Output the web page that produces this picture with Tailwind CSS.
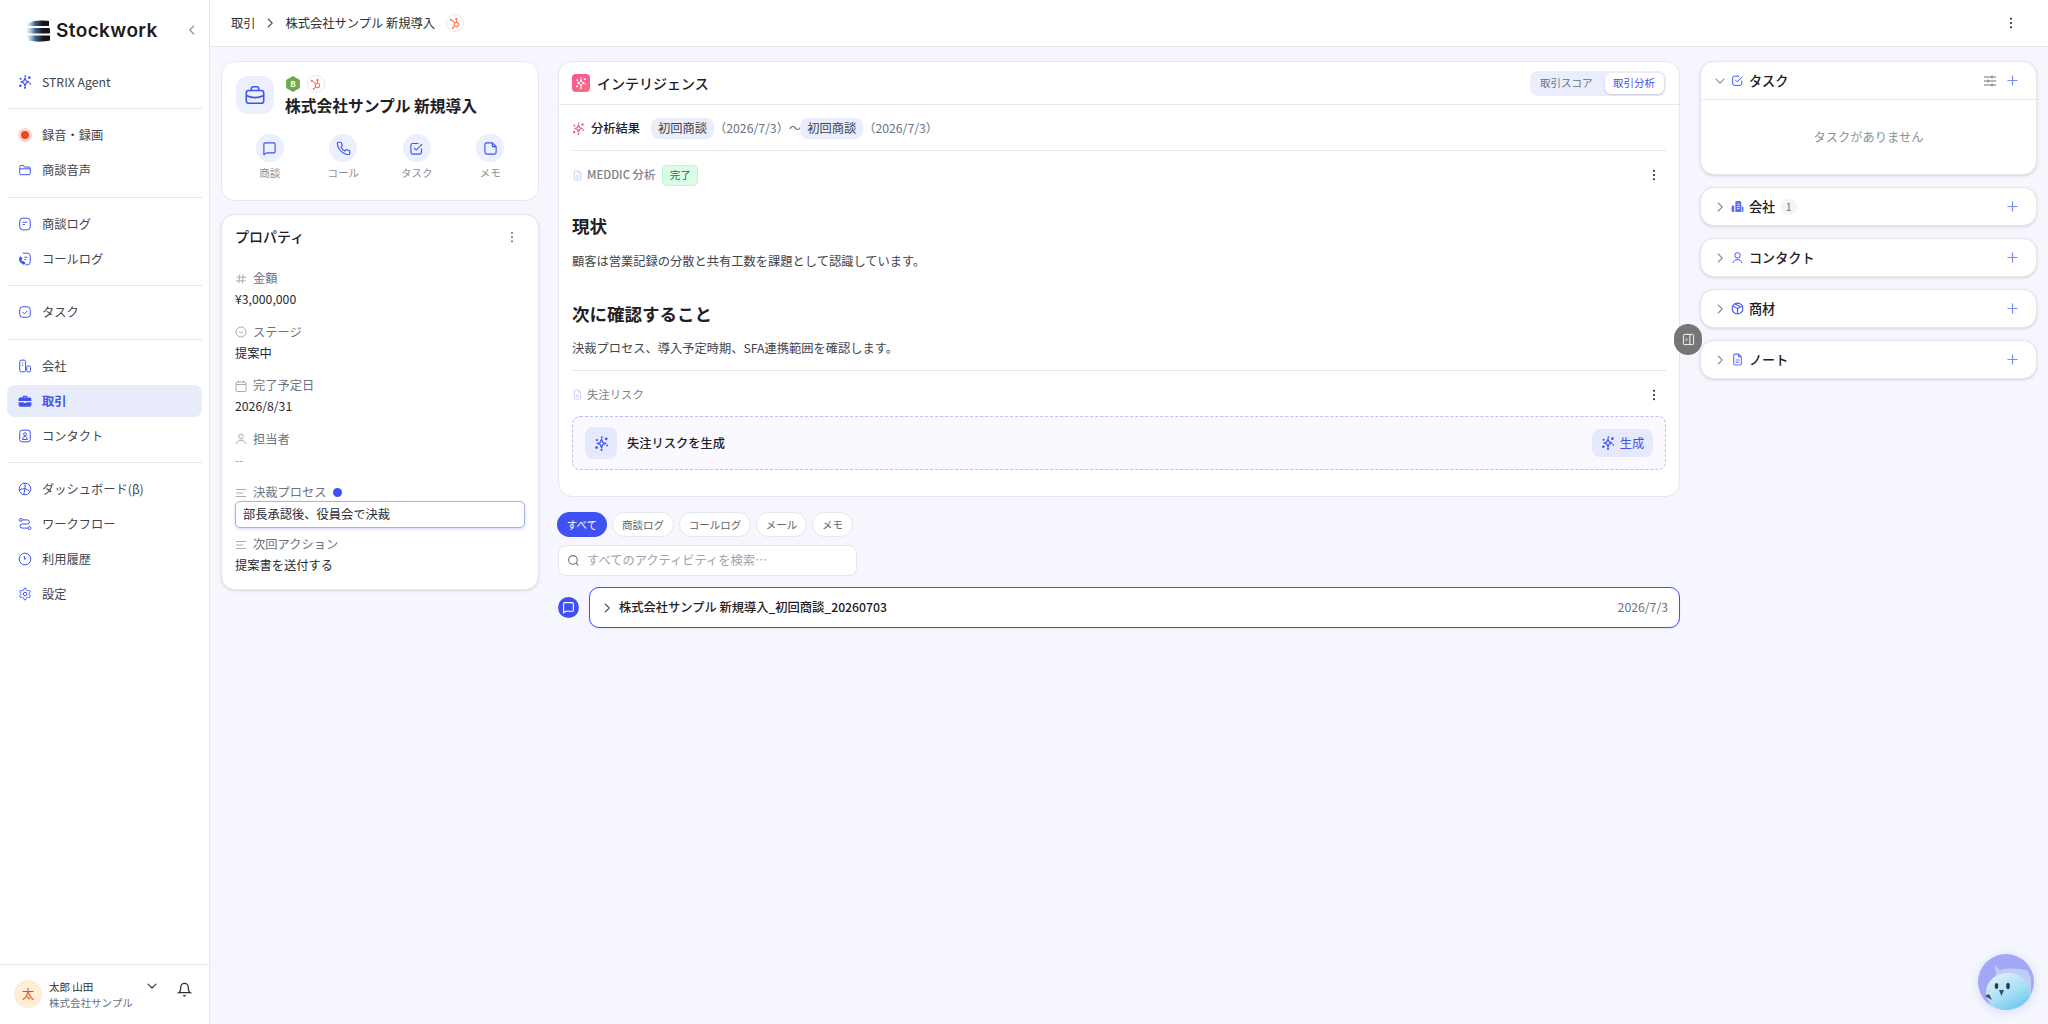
<!DOCTYPE html>
<html lang="ja">
<head>
    <meta charset="UTF-8">
    <title>株式会社サンプル 新規導入</title>
    <script src="https://cdn.jsdelivr.net/npm/@tailwindcss/browser@4"></script>
</head>
<body class="bg-[#f5f6fe] font-['Noto_Sans_CJK_JP',sans-serif] text-[12.25px] text-[#1f2937]">
    <!-- Shared icons -->
    <svg class="hidden">
        <symbol id="sparkle" viewBox="0 0 24 24"><path d="M12 5l1.900 5.100L19 12l-5.100 1.900L12 19l-1.900-5.100L5 12l5.100-1.900z" fill="none" stroke="currentColor" stroke-width="2" stroke-linejoin="round"/><circle cx="19.500" cy="4.500" r="2.200" fill="currentColor"/><circle cx="4.500" cy="6.500" r="1.800" fill="currentColor"/><circle cx="4" cy="18.500" r="2.200" fill="currentColor"/><circle cx="21" cy="15" r="1.500" fill="currentColor"/><circle cx="12" cy="22" r="1.800" fill="currentColor"/><circle cx="12.500" cy="2" r="1.500" fill="currentColor"/></symbol>
        <symbol id="hubspot" viewBox="0 0 24 24"><g fill="none" stroke="#ff7a59" stroke-width="1.900"><circle cx="14.500" cy="14.500" r="3.800"/><path d="M14.500 11V6.500M12 12L6.500 7.500M11.500 17l-3 3"/></g><circle cx="14.500" cy="5" r="2" fill="#ff7a59"/><circle cx="5" cy="6.500" r="2" fill="#ff7a59"/><circle cx="8" cy="20.500" r="1.700" fill="#ff7a59"/></symbol>
        <symbol id="kebab" viewBox="0 0 12 12"><circle cx="6" cy="1.800" r="1" fill="currentColor"/><circle cx="6" cy="6" r="1" fill="currentColor"/><circle cx="6" cy="10.200" r="1" fill="currentColor"/></symbol>
        <symbol id="doc" viewBox="0 0 24 24"><path d="M14 2H7a2 2 0 0 0-2 2v16a2 2 0 0 0 2 2h10a2 2 0 0 0 2-2V7z" fill="none" stroke="currentColor" stroke-width="2"/><path d="M14 2v5h5M8.500 13h7M8.500 17h7" fill="none" stroke="currentColor" stroke-width="2"/></symbol>
        <symbol id="lines" viewBox="0 0 12 12"><path d="M1 2.500h10M1 6h7M1 9.500h10" fill="none" stroke="currentColor" stroke-width="1.100"/></symbol>
        <symbol id="plus" viewBox="0 0 12 12"><path d="M6 1v10M1 6h10" fill="none" stroke="currentColor" stroke-width="1.300" stroke-linecap="round"/></symbol>
        <symbol id="chev-r" viewBox="0 0 12 12"><path d="M4.200 2l4 4-4 4" fill="none" stroke="currentColor" stroke-width="1.100" stroke-linecap="round" stroke-linejoin="round"/></symbol>
    </svg>

    <div class="flex h-[1024px] w-[2048px] overflow-hidden">
        <!-- Sidebar -->
        <aside class="flex h-full w-[210px] shrink-0 flex-col border-r border-[#e5e7eb] bg-white">
            <div class="flex h-[66px] shrink-0 items-start pl-[26px] pt-[19px]">
                <svg class="h-[24px] w-[25px]" viewBox="0 0 25 24">
                    <defs>
                        <linearGradient id="logoBar" x1="0" x2="1" y1="0" y2="0"><stop offset="0" stop-color="#9cc3e6" stop-opacity="0.25"/><stop offset="0.35" stop-color="#41698c"/><stop offset="0.7" stop-color="#15181c"/><stop offset="1" stop-color="#111"/></linearGradient>
                        <filter id="logoSoft"><feGaussianBlur stdDeviation="0.3"/></filter>
                    </defs>
                    <g filter="url(#logoSoft)">
                        <path d="M3 4c4-3 14-3 20-2v5H1z" fill="url(#logoBar)"/>
                        <rect x="1" y="9" width="23" height="5.500" rx="1" fill="url(#logoBar)"/>
                        <path d="M1 16.500h23v5c-6 1.500-16 1.500-21 0z" fill="url(#logoBar)"/>
                    </g>
                </svg>
                <span class="ml-[5px] w-[101px] font-['Inter',sans-serif] text-[19px] leading-[24px] font-semibold tracking-[0.4px] whitespace-nowrap text-[#1c1c1c]">Stockwork</span>
                <svg class="ml-[29px] mt-[5px] size-[12px] rotate-180 text-[#8b8f98]" viewBox="0 0 12 12"><use href="#chev-r"/></svg>
            </div>

            <nav class="flex flex-col px-[7px] text-[12.25px] text-[#3f444d]">
                <a class="flex h-[31.5px] items-center gap-[10px] rounded-lg px-[11px]"><svg class="size-[14px] text-[#3f51f0]" viewBox="0 0 24 24"><use href="#sparkle"/></svg><span>STRIX Agent</span></a>
                <div class="my-[10.5px] h-px bg-[#e5e7eb]"></div>
                <div class="flex flex-col gap-[3.5px]">
                    <a class="flex h-[31.5px] items-center gap-[10px] rounded-lg px-[11px]"><span class="flex size-[14px] items-center justify-center rounded-full bg-[#fcd9cd]"><span class="size-[8px] rounded-full bg-[#e8481f]"></span></span><span>録音・録画</span></a>
                    <a class="flex h-[31.5px] items-center gap-[10px] rounded-lg px-[11px]"><svg class="size-[14px] text-[#3f51f0]" viewBox="0 0 24 24" fill="none" stroke="currentColor" stroke-width="1.700"><path d="M3 8V6a2 2 0 0 1 2-2h4l2 3h8a2 2 0 0 1 2 2v9a2 2 0 0 1-2 2H5a2 2 0 0 1-2-2zM3 10h18"/></svg><span>商談音声</span></a>
                </div>
                <div class="my-[10.5px] h-px bg-[#e5e7eb]"></div>
                <div class="flex flex-col gap-[3.5px]">
                    <a class="flex h-[31.5px] items-center gap-[10px] rounded-lg px-[11px]"><svg class="size-[14px] text-[#3f51f0]" viewBox="0 0 24 24" fill="none" stroke="currentColor" stroke-width="1.700"><rect x="3" y="2" width="18" height="20" rx="5"/><path d="M8 9h8M8 13h4"/></svg><span>商談ログ</span></a>
                    <a class="flex h-[31.5px] items-center gap-[10px] rounded-lg px-[11px]"><svg class="size-[14px] text-[#3f51f0]" viewBox="0 0 24 24" fill="none" stroke="currentColor" stroke-width="1.700"><path d="M8 2h8a5 5 0 0 1 5 5v10a5 5 0 0 1-5 5h-3"/><path d="M11 9h5M11 13h3"/><path d="M4 8c-2 3-2 8 2 11s6 2 6 0l-3-3-2 1c-1-1-2-3-1-5l1-1z" fill="currentColor"/></svg><span>コールログ</span></a>
                </div>
                <div class="my-[10.5px] h-px bg-[#e5e7eb]"></div>
                <a class="flex h-[31.5px] items-center gap-[10px] rounded-lg px-[11px]"><svg class="size-[14px] text-[#3f51f0]" viewBox="0 0 24 24" fill="none" stroke="currentColor" stroke-width="1.700"><rect x="3" y="3" width="18" height="18" rx="5"/><path d="M8 12l3 3 5-5"/></svg><span>タスク</span></a>
                <div class="my-[10.5px] h-px bg-[#e5e7eb]"></div>
                <div class="flex flex-col gap-[3.5px]">
                    <a class="flex h-[31.5px] items-center gap-[10px] rounded-lg px-[11px]"><svg class="size-[14px] text-[#3f51f0]" viewBox="0 0 24 24" fill="none" stroke="currentColor" stroke-width="1.700"><rect x="3" y="2" width="10" height="20" rx="2.500"/><rect x="15" y="12" width="6.500" height="10" rx="2.500"/><path d="M7 7h2M7 11h2"/></svg><span>会社</span></a>
                    <a class="flex h-[31.5px] items-center gap-[10px] rounded-lg bg-[#e8ebfa] px-[11px] font-semibold text-[#3f51f0]"><svg class="size-[14px]" viewBox="0 0 24 24" fill="currentColor"><path d="M8 6V5a2 2 0 0 1 2-2h4a2 2 0 0 1 2 2v1h4a3 3 0 0 1 3 3v3H1V9a3 3 0 0 1 3-3zm2 0h4V5h-4zM1 14h9v1.500h4V14h9v5a3 3 0 0 1-3 3H4a3 3 0 0 1-3-3z"/></svg><span>取引</span></a>
                    <a class="flex h-[31.5px] items-center gap-[10px] rounded-lg px-[11px]"><svg class="size-[14px] text-[#3f51f0]" viewBox="0 0 24 24" fill="none" stroke="currentColor" stroke-width="1.700"><rect x="3" y="2" width="18" height="20" rx="4"/><circle cx="12" cy="9" r="2.500"/><path d="M8 18c0-7 8-7 8 0z"/></svg><span>コンタクト</span></a>
                </div>
                <div class="my-[10.5px] h-px bg-[#e5e7eb]"></div>
                <div class="flex flex-col gap-[3.5px]">
                    <a class="flex h-[31.5px] items-center gap-[10px] rounded-lg px-[11px]"><svg class="size-[14px] text-[#3f51f0]" viewBox="0 0 24 24" fill="none" stroke="currentColor" stroke-width="1.700"><circle cx="12" cy="12" r="10"/><path d="M12 2v9l8 5M12 11l-9 2M12 11l-2 10"/></svg><span>ダッシュボード(β)</span></a>
                    <a class="flex h-[31.5px] items-center gap-[10px] rounded-lg px-[11px]"><svg class="size-[14px] text-[#3f51f0]" viewBox="0 0 24 24" fill="none" stroke="currentColor" stroke-width="1.700"><circle cx="5" cy="5" r="2.500"/><circle cx="19.500" cy="19" r="2.500"/><path d="M8 5h8a3.500 3.500 0 0 1 0 7H7a3.500 3.500 0 0 0 0 7h9.500"/></svg><span>ワークフロー</span></a>
                    <a class="flex h-[31.5px] items-center gap-[10px] rounded-lg px-[11px]"><svg class="size-[14px] text-[#3f51f0]" viewBox="0 0 24 24" fill="none" stroke="currentColor" stroke-width="1.700"><circle cx="12" cy="12" r="10"/><path d="M11 7v5.500l3-1.500" stroke-linejoin="round"/></svg><span>利用履歴</span></a>
                    <a class="flex h-[31.5px] items-center gap-[10px] rounded-lg px-[11px]"><svg class="size-[14px] text-[#3f51f0]" viewBox="0 0 24 24" fill="none" stroke="currentColor" stroke-width="1.700"><path d="M12.22 2h-.44a2 2 0 0 0-2 2v.18a2 2 0 0 1-1 1.73l-.43.25a2 2 0 0 1-2 0l-.15-.08a2 2 0 0 0-2.73.73l-.22.38a2 2 0 0 0 .73 2.73l.15.1a2 2 0 0 1 1 1.72v.51a2 2 0 0 1-1 1.74l-.15.09a2 2 0 0 0-.73 2.73l.22.38a2 2 0 0 0 2.73.73l.15-.08a2 2 0 0 1 2 0l.43.25a2 2 0 0 1 1 1.73V20a2 2 0 0 0 2 2h.44a2 2 0 0 0 2-2v-.18a2 2 0 0 1 1-1.73l.43-.25a2 2 0 0 1 2 0l.15.08a2 2 0 0 0 2.73-.73l.22-.39a2 2 0 0 0-.73-2.73l-.15-.08a2 2 0 0 1-1-1.74v-.5a2 2 0 0 1 1-1.74l.15-.09a2 2 0 0 0 .73-2.73l-.22-.38a2 2 0 0 0-2.73-.73l-.15.08a2 2 0 0 1-2 0l-.43-.25a2 2 0 0 1-1-1.73V4a2 2 0 0 0-2-2z"/><circle cx="12" cy="12" r="3"/></svg><span>設定</span></a>
                </div>
            </nav>

            <!-- User -->
            <div class="mt-auto flex h-[60px] shrink-0 items-start border-t border-[#e5e7eb] pl-[14px] pt-[15px]">
                <span class="flex size-[28px] items-center justify-center rounded-full bg-[#ffedd5] text-[12.25px] text-[#ea4a1f]">太</span>
                <div class="ml-[7px] mt-[-1px] w-[97px]">
                    <p class="text-[10.5px] leading-[16px] text-[#2b2f36]">太郎 山田</p>
                    <p class="text-[10.5px] leading-[16px] text-[#6b7280]">株式会社サンプル</p>
                </div>
                <svg class="size-[12px] rotate-90 text-[#2b2f36]" viewBox="0 0 12 12"><use href="#chev-r"/></svg>
                <svg class="ml-[19px] mt-[2px] size-[15px] text-[#2b2f36]" viewBox="0 0 24 24" fill="none" stroke="currentColor" stroke-width="2"><path d="M6 8a6 6 0 0 1 12 0c0 7 3 9 3 9H3s3-2 3-9"/><path d="M10.300 21a1.940 1.940 0 0 0 3.400 0"/></svg>
            </div>
        </aside>

        <!-- Main -->
        <main class="relative flex min-w-0 flex-1 flex-col">
            <header class="flex h-[47px] shrink-0 items-center border-b border-[#e5e7eb] bg-white pl-[21px] pr-[31px]">
                <span class="text-[#2b2f36]">取引</span>
                <svg class="ml-[8px] size-[12px] text-[#4b5563]" viewBox="0 0 12 12"><use href="#chev-r"/></svg>
                <span class="ml-[10px] text-[#2b2f36]">株式会社サンプル 新規導入</span>
                <span class="ml-[11px] flex size-[18px] items-center justify-center rounded-full border border-[#e5e7eb] bg-white"><svg class="size-[14px]" viewBox="0 0 24 24"><use href="#hubspot"/></svg></span>
                <svg class="ml-auto size-[12px] text-[#111827]" viewBox="0 0 12 12"><use href="#kebab"/></svg>
            </header>

            <div class="flex items-start pl-[11px] pr-[11px] pt-[14px]">
                <!-- Left column -->
                <div class="flex w-[318px] shrink-0 flex-col gap-[13px]">
                    <section class="h-[140px] rounded-[14px] border border-[#e5e7eb] bg-white px-[14px] pt-[14px]">
                        <div class="flex">
                            <span class="flex size-[38px] items-center justify-center rounded-xl bg-[#eceffd] text-[#3f51f0]"><svg class="size-[22px]" viewBox="0 0 24 24" fill="none" stroke="currentColor" stroke-width="1.700"><rect x="2.500" y="7" width="19" height="14" rx="2.500"/><path d="M8 7V5a2 2 0 0 1 2-2h4a2 2 0 0 1 2 2v2M2.500 12.500c6 3 13 3 19 0M12 14v1"/></svg></span>
                            <div class="ml-[11px]">
                                <div class="flex h-[16px] items-center gap-[6px]">
                                    <svg class="size-[16px]" viewBox="0 0 16 16"><path d="M8 0l6.900 4v8L8 16l-6.900-4V4z" fill="#6ea94c"/><text x="8" y="11" text-anchor="middle" fill="#fff" font-size="8" font-weight="700" font-family="Noto Sans CJK JP">B</text></svg>
                                    <span class="flex size-[18px] items-center justify-center rounded-full border border-[#e5e7eb] bg-white"><svg class="size-[14px]" viewBox="0 0 24 24"><use href="#hubspot"/></svg></span>
                                </div>
                                <h1 class="mt-[2px] text-[15.75px] leading-[24px] font-bold text-[#1f2025]">株式会社サンプル 新規導入</h1>
                            </div>
                        </div>
                        <div class="ml-[-3px] mt-[16px] flex w-[294px] text-[10.5px] leading-[16px] text-[#8a8f98]">
                            <div class="flex w-[73.500px] flex-col items-center">
                                <span class="flex size-[28px] items-center justify-center rounded-full bg-[#eceffd] text-[#3f51f0]"><svg class="size-[15px]" viewBox="0 0 24 24" fill="none" stroke="currentColor" stroke-width="1.800"><path d="M3 5a2 2 0 0 1 2-2h14a2 2 0 0 1 2 2v12a2 2 0 0 1-2 2H7l-4 3z" stroke-linejoin="round"/></svg></span>
                                <span class="mt-[3px]">商談</span>
                            </div>
                            <div class="flex w-[73.500px] flex-col items-center">
                                <span class="flex size-[28px] items-center justify-center rounded-full bg-[#eceffd] text-[#3f51f0]"><svg class="size-[15px]" viewBox="0 0 24 24" fill="none" stroke="currentColor" stroke-width="1.800"><path d="M22 16.920v3a2 2 0 0 1-2.180 2 19.790 19.790 0 0 1-8.630-3.070 19.500 19.500 0 0 1-6-6 19.790 19.790 0 0 1-3.070-8.670A2 2 0 0 1 4.110 2h3a2 2 0 0 1 2 1.720 12.840 12.840 0 0 0 .7 2.810 2 2 0 0 1-.45 2.110L8.090 9.910a16 16 0 0 0 6 6l1.270-1.270a2 2 0 0 1 2.110-.45 12.840 12.840 0 0 0 2.810.7A2 2 0 0 1 22 16.920z"/></svg></span>
                                <span class="mt-[3px]">コール</span>
                            </div>
                            <div class="flex w-[73.500px] flex-col items-center">
                                <span class="flex size-[28px] items-center justify-center rounded-full bg-[#eceffd] text-[#3f51f0]"><svg class="size-[15px]" viewBox="0 0 24 24" fill="none" stroke="currentColor" stroke-width="1.800"><path d="M20 12v6a3 3 0 0 1-3 3H6a3 3 0 0 1-3-3V7a3 3 0 0 1 3-3h9"/><path d="M8 11l3.500 3.500L21 5"/></svg></span>
                                <span class="mt-[3px]">タスク</span>
                            </div>
                            <div class="flex w-[73.500px] flex-col items-center">
                                <span class="flex size-[28px] items-center justify-center rounded-full bg-[#eceffd] text-[#3f51f0]"><svg class="size-[15px]" viewBox="0 0 24 24" fill="none" stroke="currentColor" stroke-width="1.800"><path d="M6 3h9l6 6v9a3 3 0 0 1-3 3H6a3 3 0 0 1-3-3V6a3 3 0 0 1 3-3zM15 3v6h6" stroke-linejoin="round"/></svg></span>
                                <span class="mt-[3px]">メモ</span>
                            </div>
                        </div>
                    </section>

                    <section class="h-[376px] rounded-[14px] border border-[#e5e7eb] bg-white px-[13px] shadow-[0_1px_3px_rgba(0,0,0,0.12)]">
                        <div class="flex h-[43px] items-center justify-between">
                            <h2 class="text-[14px] font-medium text-[#1f2025]">プロパティ</h2>
                            <svg class="mr-[7px] size-[12px] text-[#6b7280]" viewBox="0 0 12 12"><use href="#kebab"/></svg>
                        </div>
                        <div class="mt-[10px] flex flex-col leading-[21px]">
                            <div class="flex items-center gap-[6px] text-[#6b7280]"><svg class="size-[12px] text-[#a8adb6]" viewBox="0 0 12 12" fill="none" stroke="currentColor" stroke-width="1"><path d="M1.500 4.200h9.500M1 7.800h9.500M4.700 1.500L3.700 10.500M8.300 1.500l-1 9"/></svg><span>金額</span></div>
                            <div>¥3,000,000</div>
                            <div class="mt-[11.500px] flex items-center gap-[6px] text-[#6b7280]"><svg class="size-[12px] text-[#a8adb6]" viewBox="0 0 12 12" fill="none" stroke="currentColor" stroke-width="1"><circle cx="6" cy="6" r="5"/><path d="M4 5.500l2 1.500 2-1.500"/></svg><span>ステージ</span></div>
                            <div>提案中</div>
                            <div class="mt-[11.500px] flex items-center gap-[6px] text-[#6b7280]"><svg class="size-[12px] text-[#a8adb6]" viewBox="0 0 12 12" fill="none" stroke="currentColor" stroke-width="1"><rect x="1" y="2" width="10" height="9.500" rx="1"/><path d="M1 4.500h10M3.500 .5v2.500M8.500 .5v2.500"/></svg><span>完了予定日</span></div>
                            <div>2026/8/31</div>
                            <div class="mt-[11.500px] flex items-center gap-[6px] text-[#6b7280]"><svg class="size-[12px] text-[#a8adb6]" viewBox="0 0 12 12" fill="none" stroke="currentColor" stroke-width="1"><circle cx="6" cy="3.500" r="2.300"/><path d="M1.500 11c0-5 9-5 9 0"/></svg><span>担当者</span></div>
                            <div class="text-[#9ca3af]">--</div>
                            <div class="mt-[11.500px] flex items-center gap-[6px] text-[#6b7280]"><svg class="size-[12px] text-[#a8adb6]" viewBox="0 0 12 12"><use href="#lines"/></svg><span>決裁プロセス</span><span class="size-[9px] rounded-full bg-[#3f51f0]"></span></div>
                            <div class="mt-[-2.500px] flex h-[27px] items-center rounded-[5px] border border-[#a5b0fb] bg-white pl-[7px] shadow-[0_1px_3px_rgba(63,81,240,0.25)]">部長承認後、役員会で決裁</div>
                            <div class="mt-[6.500px] flex items-center gap-[6px] text-[#6b7280]"><svg class="size-[12px] text-[#a8adb6]" viewBox="0 0 12 12"><use href="#lines"/></svg><span>次回アクション</span></div>
                            <div>提案書を送付する</div>
                        </div>
                    </section>
                </div>

                <!-- Middle column -->
                <div class="ml-[19px] w-[1122px] shrink-0">
                    <section class="h-[436px] rounded-[14px] border border-[#e5e7eb] bg-white">
                        <div class="flex h-[43px] items-center border-b border-[#e5e7eb] pl-[13px] pr-[13px]">
                            <span class="flex size-[18px] items-center justify-center rounded-[4px] bg-gradient-to-br from-[#f0569a] to-[#fb6a7d] text-white"><svg class="size-[12px]" viewBox="0 0 24 24"><use href="#sparkle"/></svg></span>
                            <h2 class="ml-[7px] text-[14px] font-medium text-[#1f2025]">インテリジェンス</h2>
                            <div class="ml-auto flex h-[25px] w-[136px] items-center rounded-lg bg-[#eaedfb] pl-[10px] text-[10.5px] text-[#6b7280]">
                                <span>取引スコア</span>
                                <span class="ml-[12px] flex h-[21px] w-[59px] items-center justify-center rounded-md bg-white text-[#3f51f0] shadow-[0_1px_2px_rgba(0,0,0,0.15)]">取引分析</span>
                            </div>
                        </div>
                        <div class="mx-[13px] flex h-[46px] items-center border-b border-[#e5e7eb] pt-[1px]">
                            <svg class="size-[13px] text-[#f0569a]" viewBox="0 0 24 24"><use href="#sparkle"/></svg>
                            <span class="ml-[6px] font-medium text-[#1f2025]">分析結果</span>
                            <span class="ml-[11px] flex h-[21px] w-[63px] items-center justify-center rounded-lg bg-[#eaedfb] text-[#3f444d]">初回商談</span>
                            <span class="text-[#6b7280]">（2026/7/3）</span>
                            <span class="text-[#6b7280]">〜</span>
                            <span class="ml-[-1px] flex h-[21px] w-[63px] items-center justify-center rounded-lg bg-[#eaedfb] text-[#3f444d]">初回商談</span>
                            <span class="text-[#6b7280]">（2026/7/3）</span>
                        </div>
                        <div class="px-[13px]">
                            <div class="flex h-[48px] items-center">
                                <svg class="size-[11px] text-[#c3cafb]" viewBox="0 0 24 24"><use href="#doc"/></svg>
                                <span class="ml-[4px] text-[11.375px] font-medium text-[#7b8089]">MEDDIC 分析</span>
                                <span class="ml-[7px] flex h-[21px] w-[36px] items-center justify-center rounded-[5px] border border-[#bbf7d0] bg-[#dcfce7] text-[10.5px] text-[#15803d]">完了</span>
                                <svg class="ml-auto mr-[6px] size-[12px] text-[#111827]" viewBox="0 0 12 12"><use href="#kebab"/></svg>
                            </div>
                            <h3 class="mt-[15px] text-[17.5px] leading-[24px] font-bold text-[#1f2025]">現状</h3>
                            <p class="mt-[12.500px] leading-[21px] text-[#3f444d]">顧客は営業記録の分散と共有工数を課題として認識しています。</p>
                            <h3 class="mt-[30.500px] text-[17.5px] leading-[24px] font-bold text-[#1f2025]">次に確認すること</h3>
                            <p class="mt-[11.500px] leading-[21px] text-[#3f444d]">決裁プロセス、導入予定時期、SFA連携範囲を確認します。</p>
                            <div class="mt-[11.500px] h-px bg-[#e5e7eb]"></div>
                            <div class="mt-[13px] flex h-[21px] items-center">
                                <svg class="size-[11px] text-[#c3cafb]" viewBox="0 0 24 24"><use href="#doc"/></svg>
                                <span class="ml-[4px] text-[11.375px] text-[#7b8089]">失注リスク</span>
                                <svg class="ml-auto mr-[6px] size-[12px] text-[#111827]" viewBox="0 0 12 12"><use href="#kebab"/></svg>
                            </div>
                            <div class="mt-[11px] flex h-[54px] items-center rounded-lg border border-dashed border-[#b9c1fb] bg-[#f9f9ff] pl-[12px] pr-[12px]">
                                <span class="flex size-[32px] items-center justify-center rounded-lg bg-[#e6e9fb] text-[#3f51f0]"><svg class="size-[15px]" viewBox="0 0 24 24"><use href="#sparkle"/></svg></span>
                                <span class="ml-[10px] font-medium text-[#1f2025]">失注リスクを生成</span>
                                <span class="ml-auto flex h-[28px] w-[61px] items-center justify-center gap-[5px] rounded-lg bg-[#e6e9fb] text-[#3f51f0]"><svg class="size-[14px]" viewBox="0 0 24 24"><use href="#sparkle"/></svg>生成</span>
                            </div>
                        </div>
                    </section>

                    <!-- Activity -->
                    <div class="ml-[-1px] mt-[15px] flex gap-[5px] text-[10.5px] text-[#5f646d]">
                        <span class="flex h-[25px] w-[50px] items-center justify-center rounded-full bg-[#3f51f0] text-white">すべて</span>
                        <span class="flex h-[25px] w-[62px] items-center justify-center rounded-full border border-[#e5e7eb] bg-white">商談ログ</span>
                        <span class="flex h-[25px] w-[72px] items-center justify-center rounded-full border border-[#e5e7eb] bg-white">コールログ</span>
                        <span class="flex h-[25px] w-[51px] items-center justify-center rounded-full border border-[#e5e7eb] bg-white">メール</span>
                        <span class="flex h-[25px] w-[41px] items-center justify-center rounded-full border border-[#e5e7eb] bg-white">メモ</span>
                    </div>
                    <div class="mt-[8px] flex h-[31px] w-[299px] items-center rounded-lg border border-[#e5e7eb] bg-white pl-[8px] text-[#9ca3af]">
                        <svg class="size-[13px] text-[#6b7280]" viewBox="0 0 24 24" fill="none" stroke="currentColor" stroke-width="2"><circle cx="11" cy="11" r="8"/><path d="m21 21-4.300-4.300"/></svg>
                        <span class="ml-[7px]">すべてのアクティビティを検索…</span>
                    </div>
                    <div class="mt-[11px] flex items-center">
                        <span class="flex size-[21px] shrink-0 items-center justify-center rounded-full bg-[#3f51f0] text-white"><svg class="size-[13px]" viewBox="0 0 24 24" fill="none" stroke="currentColor" stroke-width="2"><path d="M3 5a2 2 0 0 1 2-2h14a2 2 0 0 1 2 2v12a2 2 0 0 1-2 2H7l-4 3z" stroke-linejoin="round"/></svg></span>
                        <div class="ml-[10px] flex h-[41px] flex-1 items-center rounded-[10px] border-[1.500px] border-[#3f51f0] bg-white pl-[11px] pr-[11px] shadow-[0_1px_2px_rgba(0,0,0,0.08)]">
                            <svg class="size-[12px] text-[#4b5563]" viewBox="0 0 12 12"><use href="#chev-r"/></svg>
                            <span class="ml-[6px] font-medium text-[#1f2025]">株式会社サンプル 新規導入_初回商談_20260703</span>
                            <span class="ml-auto text-[#6b7280]">2026/7/3</span>
                        </div>
                    </div>
                </div>

                <!-- Right column -->
                <div class="ml-[20px] flex w-[337px] shrink-0 flex-col gap-[12px]">
                    <section class="h-[114px] rounded-[14px] border border-[#e5e7eb] bg-white shadow-[0_1px_3px_rgba(0,0,0,0.14)]">
                        <div class="flex h-[38px] items-center border-b border-[#e5e7eb] pl-[13px] pr-[18px]">
                            <svg class="size-[12px] rotate-90 text-[#8b8f98]" viewBox="0 0 12 12"><use href="#chev-r"/></svg>
                            <svg class="ml-[5px] size-[13px] text-[#3f51f0]" viewBox="0 0 24 24" fill="none" stroke="currentColor" stroke-width="1.800"><path d="M20 12v6a3 3 0 0 1-3 3H6a3 3 0 0 1-3-3V7a3 3 0 0 1 3-3h9"/><path d="M8 11l3.500 3.500L21 5"/></svg>
                            <span class="ml-[5px] text-[13.125px] font-medium text-[#1f2025]">タスク</span>
                            <svg class="ml-auto size-[14px] text-[#6b7280]" viewBox="0 0 14 14" fill="none" stroke="currentColor" stroke-width="1"><path d="M1 3h12M1 7h12M1 11h12M9 1.500v3M5 5.500v3M9 9.500v3"/></svg>
                            <svg class="ml-[10px] size-[11px] text-[#7c8bf5]" viewBox="0 0 12 12"><use href="#plus"/></svg>
                        </div>
                        <div class="flex h-[74px] items-center justify-center text-[#8a8f98]">タスクがありません</div>
                    </section>
                    <section class="flex h-[39px] items-center rounded-[14px] border border-[#e5e7eb] bg-white pl-[13px] pr-[18px] shadow-[0_1px_3px_rgba(0,0,0,0.14)]">
                        <svg class="size-[12px] text-[#8b8f98]" viewBox="0 0 12 12"><use href="#chev-r"/></svg>
                        <svg class="ml-[5px] size-[13px] text-[#5f6ff2]" viewBox="0 0 24 24" fill="currentColor"><path d="M10 2h6a3 3 0 0 1 3 3v17H8V4a2 2 0 0 1 2-2zm1 5v1.500h5V7zm0 4v1.500h5V11zm0 4v1.500h5V15zM6 10v12H3a2 2 0 0 1-2-2v-7a3 3 0 0 1 3-3zM21 12a2 2 0 0 1 2 2v6a2 2 0 0 1-2 2h-1V12z" fill-rule="evenodd"/></svg>
                        <span class="ml-[5px] text-[13.125px] font-medium text-[#1f2025]">会社</span>
                        <span class="ml-[5px] flex h-[16px] w-[17px] items-center justify-center rounded-full bg-[#f3f4f6] text-[10.5px] text-[#6b7280]">1</span>
                        <svg class="ml-auto size-[11px] text-[#7c8bf5]" viewBox="0 0 12 12"><use href="#plus"/></svg>
                    </section>
                    <section class="flex h-[39px] items-center rounded-[14px] border border-[#e5e7eb] bg-white pl-[13px] pr-[18px] shadow-[0_1px_3px_rgba(0,0,0,0.14)]">
                        <svg class="size-[12px] text-[#8b8f98]" viewBox="0 0 12 12"><use href="#chev-r"/></svg>
                        <svg class="ml-[5px] size-[13px] text-[#3f51f0]" viewBox="0 0 24 24" fill="none" stroke="currentColor" stroke-width="1.800"><circle cx="12" cy="8" r="5"/><path d="M4 22c0-8 16-8 16 0"/></svg>
                        <span class="ml-[5px] text-[13.125px] font-medium text-[#1f2025]">コンタクト</span>
                        <svg class="ml-auto size-[11px] text-[#7c8bf5]" viewBox="0 0 12 12"><use href="#plus"/></svg>
                    </section>
                    <section class="flex h-[39px] items-center rounded-[14px] border border-[#e5e7eb] bg-white pl-[13px] pr-[18px] shadow-[0_1px_3px_rgba(0,0,0,0.14)]">
                        <svg class="size-[12px] text-[#8b8f98]" viewBox="0 0 12 12"><use href="#chev-r"/></svg>
                        <svg class="ml-[5px] size-[13px] text-[#3f51f0]" viewBox="0 0 24 24" fill="none" stroke="currentColor" stroke-width="2"><circle cx="12" cy="12" r="10"/><path d="M4 8l8 4 8-4M12 12v9M8 4l8 4"/></svg>
                        <span class="ml-[5px] text-[13.125px] font-medium text-[#1f2025]">商材</span>
                        <svg class="ml-auto size-[11px] text-[#7c8bf5]" viewBox="0 0 12 12"><use href="#plus"/></svg>
                    </section>
                    <section class="flex h-[39px] items-center rounded-[14px] border border-[#e5e7eb] bg-white pl-[13px] pr-[18px] shadow-[0_1px_3px_rgba(0,0,0,0.14)]">
                        <svg class="size-[12px] text-[#8b8f98]" viewBox="0 0 12 12"><use href="#chev-r"/></svg>
                        <svg class="ml-[5px] size-[13px] text-[#5f6ff2]" viewBox="0 0 24 24"><use href="#doc"/></svg>
                        <span class="ml-[5px] text-[13.125px] font-medium text-[#1f2025]">ノート</span>
                        <svg class="ml-auto size-[11px] text-[#7c8bf5]" viewBox="0 0 12 12"><use href="#plus"/></svg>
                    </section>
                </div>
            </div>

            <!-- Panel toggle, overlaps the columns -->
            <button class="absolute left-[1464px] top-[324px] flex h-[31px] w-[28px] items-center justify-center rounded-full bg-[#767676] text-white">
                <svg class="size-[13px]" viewBox="0 0 14 14" fill="none" stroke="currentColor" stroke-width="1"><rect x="1.500" y="1.500" width="11" height="11" rx="1"/><path d="M8.500 1.500v11M4 5.500L5.500 7 4 8.500"/></svg>
            </button>

            <!-- Assistant bubble -->
            <div class="absolute bottom-[14px] right-[14px] size-[56px] rounded-full shadow-[0_2px_10px_rgba(99,102,241,0.2)]">
                <svg class="size-[56px]" viewBox="0 0 56 56">
                    <defs>
                        <linearGradient id="botBody" x1="0.2" x2="0.8" y1="0" y2="1"><stop offset="0" stop-color="#dff1fb"/><stop offset="0.55" stop-color="#a6dff5"/><stop offset="1" stop-color="#5fc4ee"/></linearGradient>
                        <clipPath id="botClip"><circle cx="28" cy="28" r="28"/></clipPath>
                    </defs>
                    <g clip-path="url(#botClip)">
                        <rect width="56" height="56" fill="#a3a8f4"/>
                        <path d="M18 19l-1-8 5 5c8-2 18-2 28 1l3 8v31H10z" fill="#c2cdf7"/>
                        <ellipse cx="30" cy="38" rx="22" ry="19" fill="url(#botBody)"/>
                        <path d="M7 42l4-2 3 6z" fill="#3e4a5c"/>
                        <ellipse cx="18.500" cy="32" rx="1.800" ry="3" fill="#2f3a4c"/>
                        <ellipse cx="30" cy="32" rx="1.800" ry="3.200" fill="#2f3a4c"/>
                        <path d="M21 36h5l-2.500 6z" fill="#3e4a5c"/>
                    </g>
                </svg>
            </div>
        </main>
    </div>
</body>
</html>
